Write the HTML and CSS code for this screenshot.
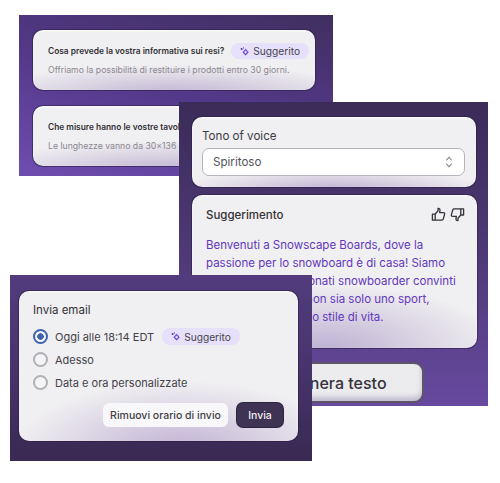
FILE: index.html
```html
<!DOCTYPE html>
<html lang="it">
  <head>
    <meta charset="UTF-8" />
    <title>Suggerimenti</title>
    <link rel="stylesheet" href="styles.css">
  </head>
  <body>
    <!-- finestra resi -->
    <div class="panel panel-faq">
      <div class="card faq">
        <div class="faq-head">
          <b>Cosa prevede la vostra informativa sui resi?</b>
          <span class="tag">
            <svg class="spark" viewBox="0 0 10 10"><path d="M6.2 3 8.8 5.8 6.2 8.6 3.6 5.8Z" fill="none" stroke="#6a3fd0" stroke-width="1.3"/><circle cx="1.8" cy="2.2" r="1.1" fill="#4f2fa8"/><circle cx="3.9" cy="1" r=".6" fill="#4f2fa8"/></svg>
            Suggerito
          </span>
        </div>
        <p>Offriamo la possibilità di restituire i prodotti entro 30 giorni.</p>
      </div>
      <div class="card faq">
        <div class="faq-head faq-cut">
          <b>Che misure hanno le vostre tavole?</b>
        </div>
        <p class="faq-cut">Le lunghezze vanno da 30x136 cm a 30x164 cm.</p>
      </div>
    </div>

    <!-- finestra tono di voce -->
    <div class="panel panel-tone">
      <div class="card tone">
        <label>Tono of voice</label>
        <div class="select">
          <span>Spiritoso</span>
          <svg class="chevrons" viewBox="0 0 10 16"><path d="M2 6 5 2.5 8 6M2 10 5 13.5 8 10" fill="none" stroke="#77757c" stroke-width="1.2"/></svg>
        </div>
      </div>
      <div class="card hint">
        <div class="hint-head">
          <span>Suggerimento</span>
          <div class="thumbs">
            <svg viewBox="0 0 16 16"><path d="M1.5 7.5H4.5V14H1.5ZM4.5 7.5 7.5 4V1.5C9 1.2 9.8 2.3 9.6 3.6L9.2 6H13.2C14.3 6 14.8 6.9 14.5 7.8L13 13C12.8 13.7 12.3 14 11.6 14H4.5" fill="none" stroke="#35333a" stroke-width="1.4" stroke-linejoin="round"/></svg>
            <svg viewBox="0 0 16 16"><path d="M14.5 8.5H11.5V2H14.5ZM11.5 8.5 8.5 12V14.5C7 14.8 6.2 13.7 6.4 12.4L6.8 10H2.8C1.7 10 1.2 9.1 1.5 8.2L3 3C3.2 2.3 3.7 2 4.4 2H11.5" fill="none" stroke="#35333a" stroke-width="1.4" stroke-linejoin="round"/></svg>
          </div>
        </div>
        <p>Benvenuti a Snowscape Boards, dove la<br>passione per lo snowboard è di casa! Siamo<br>un team di appassionati snowboarder convinti<br>che lo snowboard non sia solo uno sport,<br>ma un vero e proprio stile di vita.</p>
      </div>
      <button class="generate">Genera testo</button>
    </div>

    <!-- finestra invio email -->
    <div class="panel panel-send">
      <div class="card send">
        <div class="send-title">Invia email</div>
        <div class="option">
          <i class="radio on"></i>
          <span>Oggi alle 18:14 EDT</span>
          <span class="tag">
            <svg class="spark" viewBox="0 0 10 10"><path d="M6.2 3 8.8 5.8 6.2 8.6 3.6 5.8Z" fill="none" stroke="#6a3fd0" stroke-width="1.3"/><circle cx="1.8" cy="2.2" r="1.1" fill="#4f2fa8"/><circle cx="3.9" cy="1" r=".6" fill="#4f2fa8"/></svg>
            Suggerito
          </span>
        </div>
        <div class="option"><i class="radio"></i><span>Adesso</span></div>
        <div class="option"><i class="radio"></i><span>Data e ora personalizzate</span></div>
        <div class="actions">
          <button class="btn-light">Rimuovi orario di invio</button>
          <button class="btn-dark">Invia</button>
        </div>
      </div>
    </div>
  </body>
</html>
```

FILE: styles.css
```css
* {
  padding: 0;
  margin: 0;
  box-sizing: border-box;
}
html,
body {
  height: 100%;
  overflow: hidden;
}
body {
  position: relative;
  background: white;
  font-family: Inter, "Liberation Sans", sans-serif;
  color: #333136;
}

/* le tre finestre stanno su una tela libera */
.panel {
  position: absolute;
  display: flex;
  flex-direction: column;
}
.panel-faq {
  left: 19px;
  top: 15px;
  width: 314px;
  height: 161px;
  padding: 15px 18px 0 14px;
  gap: 16px;
  background: linear-gradient(195deg, #3f2f5f 0%, #54398a 50%, #6f4db0 100%);
}
.panel-tone {
  left: 179px;
  top: 102px;
  width: 309px;
  height: 304px;
  padding: 15px 12px 0 13px;
  background: linear-gradient(180deg, #3a2b58 0%, #4c3873 45%, #67499f 100%);
}
.panel-send {
  left: 10px;
  top: 275px;
  width: 302px;
  height: 186px;
  padding: 16px 14px 0 9px;
  background: linear-gradient(180deg, #523c7e 0%, #47346c 50%, #382a52 100%);
}

.card {
  border-radius: 10px;
  background-color: #f0eff1;
  box-shadow: 0 0 0 1px rgba(40, 28, 66, 0.55), inset 0 1px 2px white;
}

/* resi */
.faq {
  height: 60px;
  padding: 11px 10px 0 15px;
  overflow: hidden;
  background-image: radial-gradient(ellipse 70% 50% at 50% 108%, #bfb2d2 0%, rgba(240, 239, 241, 0) 100%);
}
.faq-head {
  display: flex;
  align-items: center;
  height: 20px;
  gap: 7px;
  white-space: nowrap;
}
.faq-head b {
  font-size: 8.4px;
  font-weight: 600;
}
.faq p {
  margin-top: 4px;
  font-size: 8.7px;
  color: #8b8890;
  white-space: nowrap;
}
/* il testo finisce sotto la finestra del tono */
.faq-cut {
  width: 131px;
  overflow: hidden;
}
.tag {
  display: inline-flex;
  align-items: center;
  gap: 4px;
  height: 16px;
  padding: 0 9px;
  border-radius: 8px;
  background: #e6e0fb;
  font-size: 10.2px;
  color: #46434c;
}
.spark {
  width: 9px;
  height: 9px;
}

/* tono */
.tone {
  width: 284px;
  height: 70px;
  padding: 12px 11px 0 10px;
  background-image: radial-gradient(ellipse 55% 32% at 50% 105%, #bfb0d3 0%, rgba(240, 239, 241, 0) 100%);
}
.tone label {
  display: block;
  font-size: 11.6px;
  line-height: 15px;
  color: #3f3d44;
}
.select {
  display: flex;
  align-items: center;
  justify-content: space-between;
  height: 28px;
  margin-top: 4px;
  padding: 0 10px;
  border: 1px solid #b6b4ba;
  border-radius: 7px;
  background: white;
  font-size: 11.6px;
  color: #55535a;
}
.chevrons {
  width: 10px;
  height: 14px;
}
.hint {
  width: 285px;
  height: 153px;
  margin-top: 8px;
  padding: 12px 14px 0;
  background-image: radial-gradient(ellipse 60% 42% at 48% 100%, #bfb2d3 0%, rgba(240, 239, 241, 0) 100%);
}
.hint-head {
  display: flex;
  align-items: center;
  justify-content: space-between;
  height: 15px;
  font-size: 11.5px;
  font-weight: 500;
}
.thumbs {
  display: flex;
  gap: 4px;
  margin-right: -2px;
}
.thumbs svg {
  width: 15px;
  height: 15px;
}
.hint p {
  margin-top: 14px;
  font-size: 11.5px;
  line-height: 18px;
  color: #6237bd;
  white-space: nowrap;
}
.generate {
  align-self: flex-end;
  width: 173px;
  height: 41px;
  margin-top: 14px;
  margin-right: 52px;
  border: 2px solid #5d5568;
  border-radius: 10px;
  background: #ecebee;
  font-family: inherit;
  font-size: 16px;
  font-weight: 500;
  color: #35333a;
  box-shadow: inset 0 -4px 5px rgba(120, 105, 150, 0.35);
}

/* invio */
.send {
  height: 150px;
  padding: 12px 15px 0 14px;
  background-image: radial-gradient(ellipse 60% 48% at 58% 108%, #bfb0d3 0%, rgba(240, 239, 241, 0) 100%);
}
.send-title {
  font-size: 11.5px;
  line-height: 14px;
  margin-bottom: 8px;
}
.option {
  display: flex;
  align-items: center;
  gap: 7px;
  height: 23px;
  font-size: 11px;
  color: #45434a;
}
.option .tag {
  margin-left: 1px;
  height: 17px;
}
.radio {
  width: 15px;
  height: 15px;
  border: 2px solid #b2b0b6;
  border-radius: 50%;
  background: #f4f3f5;
}
.radio.on {
  border-color: #3e63ae;
  background: radial-gradient(circle, #3e63ae 0 3px, #f4f3f5 3.5px);
}
.actions {
  display: flex;
  justify-content: flex-end;
  gap: 9px;
  margin-top: 9px;
}
.actions button {
  height: 24px;
  border: none;
  border-radius: 6px;
  font-family: inherit;
  font-size: 10.5px;
  font-weight: 500;
}
.btn-light {
  width: 125px;
  background: #f8f7f9;
  color: #403e45;
}
.btn-dark {
  width: 46px;
  background: #3f3353;
  color: #f2f0f5;
  box-shadow: 0 0 0 1px #2c2340;
}
```
